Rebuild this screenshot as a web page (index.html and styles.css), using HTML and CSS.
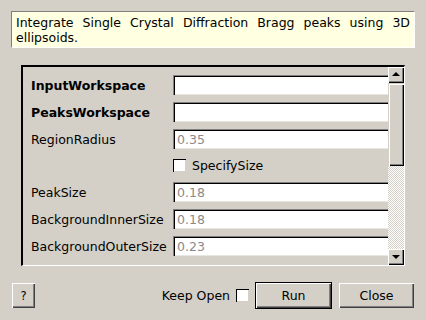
FILE: index.html
```html
<!DOCTYPE html>
<html lang="en">
<head>
    <meta charset="UTF-8">
    <title>IntegrateEllipsoids</title>
    <link rel="stylesheet" href="styles.css">
</head>
<body>
<div class="dialog">
    <div class="description">Integrate Single Crystal Diffraction Bragg peaks using 3D ellipsoids.</div>

    <div class="params">
        <div class="params-body">
            <div class="row">
                <label class="bold">InputWorkspace</label>
                <input type="text" value="">
            </div>
            <div class="row">
                <label class="bold">PeaksWorkspace</label>
                <input type="text" value="">
            </div>
            <div class="row">
                <label>RegionRadius</label>
                <input type="text" placeholder="0.35">
            </div>
            <div class="row check-row">
                <label></label>
                <span class="check"></span>
                <span>SpecifySize</span>
            </div>
            <div class="row">
                <label>PeakSize</label>
                <input type="text" placeholder="0.18">
            </div>
            <div class="row">
                <label>BackgroundInnerSize</label>
                <input type="text" placeholder="0.18">
            </div>
            <div class="row">
                <label>BackgroundOuterSize</label>
                <input type="text" placeholder="0.23">
            </div>
        </div>
        <div class="scrollbar">
            <div class="arrow up"><span></span></div>
            <div class="thumb"></div>
            <div class="track"></div>
            <div class="arrow down"><span></span></div>
        </div>
    </div>

    <div class="buttons">
        <button class="btn help">?</button>
        <div class="spacer"></div>
        <span class="keep">Keep Open</span>
        <span class="check keep-check"></span>
        <button class="btn run">Run</button>
        <button class="btn close">Close</button>
    </div>
</div>
</body>
</html>
```

FILE: styles.css
```css
body {
    margin: 0;
    background-color: #d4d0c8;
    font-family: 'DejaVu Sans', sans-serif;
    font-size: 12.5px;
    color: #000;
}

.dialog {
    width: 426px;
    height: 320px;
    padding: 11px 11px 0 11px;
    box-sizing: border-box;
    display: flex;
    flex-direction: column;
}

.description {
    height: 37px;
    box-sizing: border-box;
    background-color: #ffffe1;
    border-top: 1px solid #808080;
    border-left: 1px solid #808080;
    border-right: 1px solid #fff;
    border-bottom: 1px solid #fff;
    padding: 3px 4px 0 4px;
    line-height: 15px;
    text-align: justify;
}

.params {
    margin: 17px 10px 0 10px;
    height: 201px;
    box-sizing: border-box;
    border-top: 2px solid #000;
    border-left: 2px solid #000;
    border-right: 1px solid #fff;
    border-bottom: 1px solid #fff;
    display: flex;
    overflow: hidden;
}

.params-body {
    flex: 1;
    padding: 8px 0 0 8px;
    display: flex;
    flex-direction: column;
    gap: 7px;
    overflow: hidden;
}

.row {
    display: flex;
    align-items: center;
    height: 20px;
    flex-shrink: 0;
}

.row label {
    width: 142px;
    flex-shrink: 0;
}

.bold {
    font-weight: bold;
}

.row input {
    flex: 1;
    min-width: 0;
    height: 20px;
    box-sizing: border-box;
    border: none;
    box-shadow: inset 1px 1px 0 #808080, inset 2px 2px 0 #000, inset -1px -1px 0 #e8e6e0;
    background: #fff;
    padding: 1px 0 0 4px;
    margin-right: -2px;
    font-family: 'DejaVu Sans', sans-serif;
    font-size: 12.5px;
    color: #000;
}

.row input::placeholder {
    color: #8a8a8a;
}

.check-row {
    height: 19px;
}

.check {
    display: inline-block;
    width: 13px;
    height: 13px;
    box-sizing: border-box;
    background: #fff;
    box-shadow: inset 1px 1px 0 #000, inset -1px -1px 0 #d4d0c8;
    margin-right: 6px;
}

.scrollbar {
    width: 16px;
    flex-shrink: 0;
    display: flex;
    flex-direction: column;
}

.arrow {
    height: 16px;
    box-sizing: border-box;
    background: #d4d0c8;
    box-shadow: inset 1px 1px 0 #fff, inset -1px -1px 0 #000, inset -2px -2px 0 #808080;
    display: flex;
    align-items: center;
    justify-content: center;
}

.arrow span {
    width: 0;
    height: 0;
    border-left: 4px solid transparent;
    border-right: 4px solid transparent;
}

.up span {
    border-bottom: 4px solid #000;
    margin-top: -2px;
}

.down span {
    border-top: 4px solid #000;
}

.thumb {
    height: 83px;
    box-sizing: border-box;
    background: #d4d0c8;
    box-shadow: inset 1px 1px 0 #d4d0c8, inset 2px 2px 0 #fff, inset -1px -1px 0 #000, inset -2px -2px 0 #808080;
}

.track {
    flex: 1;
    background-color: #d4d0c8;
    background-image: repeating-conic-gradient(#fff 0 25%, #d4d0c8 0 50%);
    background-size: 2px 2px;
}

.buttons {
    display: flex;
    align-items: center;
    margin-top: 16px;
    padding-left: 1px;
}

.spacer {
    flex: 1;
}

.btn {
    height: 25px;
    box-sizing: border-box;
    border: none;
    background: #d4d0c8;
    box-shadow: inset 1px 1px 0 #fff, inset -1px -1px 0 #404040, inset -2px -2px 0 #808080;
    font-family: 'DejaVu Sans', sans-serif;
    font-size: 12.5px;
    color: #000;
    padding: 0;
}

.help {
    width: 23px;
    font-size: 11.5px;
}

.keep {
    margin-right: 6px;
}

.keep-check {
    margin-right: 6px;
}

.run {
    width: 77px;
    height: 27px;
    margin-right: 7px;
    box-shadow: inset 0 0 0 1px #000, inset 2px 2px 0 #fff, inset -2px -2px 0 #404040, inset -3px -3px 0 #808080;
}

.close {
    width: 75px;
    margin-right: 1px;
}
```
